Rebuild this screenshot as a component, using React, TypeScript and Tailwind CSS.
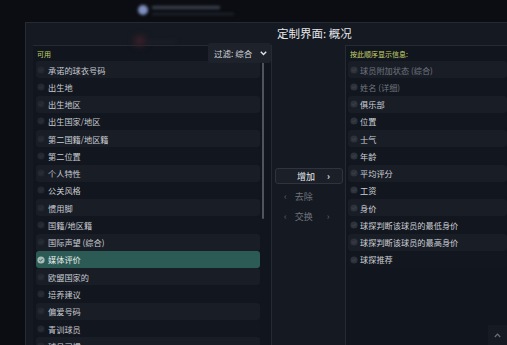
import React from "react";

const leftItems = [
  "承诺的球衣号码",
  "出生地",
  "出生地区",
  "出生国家/地区",
  "第二国籍/地区籍",
  "第二位置",
  "个人特性",
  "公关风格",
  "惯用脚",
  "国籍/地区籍",
  "国际声望 (综合)",
  "媒体评价",
  "欧盟国家的",
  "培养建议",
  "偏爱号码",
  "青训球员",
  "球员习惯",
];

const rightItems: { t: string; dim?: boolean }[] = [
  { t: "球员附加状态 (综合)", dim: true },
  { t: "姓名 (详细)", dim: true },
  { t: "俱乐部" },
  { t: "位置" },
  { t: "士气" },
  { t: "年龄" },
  { t: "平均评分" },
  { t: "工资" },
  { t: "身价" },
  { t: "球探判断该球员的最低身价" },
  { t: "球探判断该球员的最高身价" },
  { t: "球探推荐" },
];

function Check({ on, light }: { on?: boolean; light?: boolean }) {
  const bg = on ? "#a9bdb8" : light ? "#2c313a" : "#232730";
  const stroke = on ? "#2d5a55" : light ? "#40454f" : "#2f343d";
  return (
    <svg width="8" height="8" viewBox="0 0 8 8" className="shrink-0">
      <circle cx="4" cy="4" r="3.6" fill={bg} />
      <path d="M2.3 4.1 L3.5 5.2 L5.8 2.8" stroke={stroke} strokeWidth="1" fill="none" />
    </svg>
  );
}

export default function App() {
  const font = { fontFamily: '"Noto Sans CJK SC", "Noto Sans", sans-serif' };
  return (
    <div
      className="w-[507px] h-[345px] bg-[#0b0d12] overflow-hidden flex flex-col relative"
      style={font}
    >
      {/* blurred background top */}
      <div className="h-[22px] shrink-0 flex items-start pl-[138px] pt-[5px] gap-[4px]">
        <div className="w-[10px] h-[10px] rounded-full bg-[#7f90c0] blur-[1.5px]" />
        <div className="flex flex-col gap-[4px] pt-[1px]">
          <div className="w-[68px] h-[3px] bg-[#3e4350] blur-[1.5px]" />
          <div className="w-[82px] h-[2px] bg-[#23272f] blur-[1.5px]" />
        </div>
      </div>
      <div className="flex flex-1 min-h-0">
        <div className="w-[25px] shrink-0" />
        <div className="flex-1 bg-[#151921] border-l border-t border-[#262a33] flex flex-col min-h-0">
          {/* title */}
          <div className="h-[22px] shrink-0 relative flex items-center pl-[251px]">
            <div className="absolute left-[108px] top-[13px] w-[12px] h-[10px] rounded-full bg-[#3a1f2a] blur-[3px]" />
            <div className="absolute left-[120px] top-[18px] w-[30px] h-[2px] bg-[#20242c] blur-[2px]" />
            <span className="text-[11.5px] text-[#e4e6ea] leading-none relative">定制界面: 概况</span>
          </div>
          {/* body */}
          <div className="flex flex-1 min-h-0 pl-[7px]">
            {/* left panel */}
            <div className="w-[239px] shrink-0 border-t border-r border-[#262a33] bg-[#11151d] flex flex-col">
              <div className="h-[15px] shrink-0 flex items-start pl-[4px] relative">
                <span className="text-[7px] text-[#c5d36c] leading-none mt-[5px]">可用</span>
                <div className="ml-auto -mt-[3px] h-[20px] w-[63px] bg-[#1d222b] rounded-[2px] flex items-center pl-[6px] gap-[8px]">
                  <span className="text-[8.5px] text-[#d6d9de] leading-none">过滤: 综合</span>
                  <svg width="7" height="5" viewBox="0 0 7 5">
                    <path d="M0.8 0.8 L3.5 3.6 L6.2 0.8" stroke="#e0e3e8" strokeWidth="1.4" fill="none" />
                  </svg>
                </div>
              </div>
              <div className="flex flex-1 min-h-0">
                <div className="w-[227px] pl-[3px] flex flex-col">
                  {leftItems.map((t, i) => {
                    const sel = t === "媒体评价";
                    return (
                      <div
                        key={t}
                        className={
                          "h-[17.27px] shrink-0 flex items-center gap-[3px] pl-[1px] rounded-[3px] " +
                          (sel ? "bg-[#2c5b55]" : i % 2 === 0 ? "bg-[#191d26]" : "bg-[#12161e]")
                        }
                      >
                        <Check on={sel} />
                        <span
                          className={
                            "text-[8.2px] leading-none whitespace-nowrap " +
                            (sel ? "text-[#e6ece9]" : "text-[#c8ccd2]")
                          }
                        >
                          {t}
                        </span>
                      </div>
                    );
                  })}
                </div>
                <div className="w-[3px] ml-[2px] pt-[1px]">
                  <div className="w-[2px] h-[157px] bg-[#4e535d] rounded-full" />
                </div>
              </div>
            </div>
            {/* middle */}
            <div className="w-[73px] shrink-0 flex flex-col items-start pt-[123px] pl-[3px] gap-[4px]">
              <div className="w-[68px] h-[16px] border border-[#2e333d] bg-[#1b1f28] rounded-[3px] flex items-center pl-[21px]">
                <span className="text-[9px] text-[#e6e8ec] leading-none">增加</span>
                <span className="ml-[12px] text-[9px] text-[#e6e8ec] leading-none font-bold">›</span>
              </div>
              <div className="w-[68px] h-[16px] flex items-center pl-[9px]">
                <span className="text-[9px] text-[#5f646e] leading-none">‹</span>
                <span className="ml-[8px] text-[9px] text-[#6e737d] leading-none">去除</span>
              </div>
              <div className="w-[68px] h-[16px] flex items-center pl-[9px]">
                <span className="text-[9px] text-[#5f646e] leading-none">‹</span>
                <span className="ml-[8px] text-[9px] text-[#6e737d] leading-none">交换</span>
                <span className="ml-[14px] text-[9px] text-[#5f646e] leading-none">›</span>
              </div>
            </div>
            {/* right panel */}
            <div className="flex-1 border-t border-l border-[#262a33] bg-[#11151d] flex flex-col relative">
              <div className="h-[15px] shrink-0 flex items-start pl-[4px]">
                <span className="text-[7px] text-[#c5d36c] leading-none mt-[5px]">按此顺序显示信息:</span>
              </div>
              <div className="flex flex-col pl-[2px]">
                {rightItems.map((r, i) => (
                  <div
                    key={r.t}
                    className={
                      "h-[17.27px] shrink-0 flex items-center gap-[2px] pl-[2px] rounded-[3px] " +
                      (i % 2 === 0 ? "bg-[#191d26]" : "bg-[#12161e]")
                    }
                  >
                    <Check light />
                    <span
                      className={
                        "text-[8.2px] leading-none whitespace-nowrap " +
                        (r.dim ? "text-[#70757f]" : "text-[#ccd0d6]")
                      }
                    >
                      {r.t}
                    </span>
                  </div>
                ))}
              </div>
              <div className="absolute right-0 bottom-0 w-[19px] h-[20px] bg-[#161a22] flex items-center justify-center">
                <svg width="7" height="5" viewBox="0 0 7 5">
                  <path d="M0.8 4 L3.5 1.2 L6.2 4" stroke="#6b707a" strokeWidth="1.2" fill="none" />
                </svg>
              </div>
            </div>
          </div>
        </div>
      </div>
    </div>
  );
}
